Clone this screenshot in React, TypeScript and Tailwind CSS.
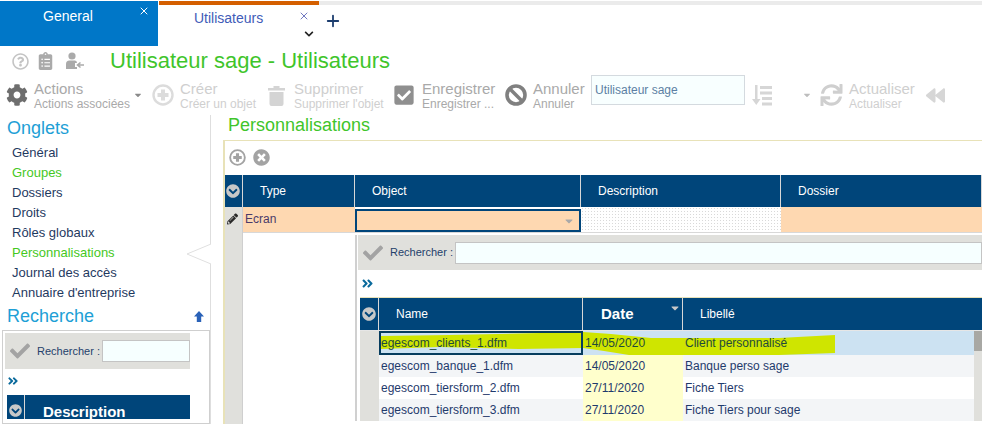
import {
  FaBackward,
  FaCaretDown,
  FaCheck,
  FaCheckSquare,
  FaChevronCircleDown,
  FaChevronDown,
  FaClipboardList,
  FaCog,
  FaPencilAlt,
  FaRegQuestionCircle,
  FaSync,
  FaTimesCircle,
  FaAngleDoubleRight,
} from 'react-icons/fa';
import { Plus, X } from 'lucide-react';

const tabs = ['Général', 'Groupes', 'Dossiers', 'Droits', 'Rôles globaux', 'Personnalisations', "Journal des accès", "Annuaire d'entreprise"];

const rows = [
  { name: 'egescom_clients_1.dfm', date: '14/05/2020', label: 'Client personnalisé' },
  { name: 'egescom_banque_1.dfm', date: '14/05/2020', label: 'Banque perso sage' },
  { name: 'egescom_tiersform_2.dfm', date: '27/11/2020', label: 'Fiche Tiers' },
  { name: 'egescom_tiersform_3.dfm', date: '27/11/2020', label: 'Fiche Tiers pour sage' },
];

function ToolItem({ title, sub, w, dim }: { title: string; sub: string; w: string; dim?: boolean }) {
  return (
    <div className={`${w} shrink-0 mt-[2px] ${dim ? 'text-[#cfcfcf]' : 'text-[#a9a9a9]'}`}>
      <div className="text-[15px] leading-[16px] whitespace-nowrap">{title}</div>
      <div className="text-[12px] leading-[14px] whitespace-nowrap">{sub}</div>
    </div>
  );
}

function RingPlus({ className }: { className: string }) {
  return (
    <svg className={className} viewBox="0 0 22 22" fill="none">
      <circle cx="11" cy="11" r="9.5" stroke="currentColor" strokeWidth="2.4" />
      <path d="M11 5.5v11M5.5 11h11" stroke="currentColor" strokeWidth="4" />
    </svg>
  );
}

function SearchBar({ className, inputClass }: { className: string; inputClass: string }) {
  return (
    <div className={`flex items-center bg-[#e0e0dc] ${className}`}>
      <FaCheck className="w-5 h-5 text-[#a3a3a3] shrink-0" />
      <span className="ml-[7px] text-[11px] text-[#24406b] whitespace-nowrap">Rechercher :</span>
      <div className={`h-[22px] ml-[2px] bg-[#f6ffff] border border-[#c4c4c4] ${inputClass}`} />
    </div>
  );
}

export default function App() {
  return (
    <div className="w-[982px] h-[424px] overflow-hidden bg-white font-['Liberation_Sans',Arial,sans-serif]">
      {/* onglets du haut */}
      <div className="flex h-[46px] pt-px">
        <div className="relative w-[158px] bg-[#0077c8] text-white text-[14px] pt-[5px] pl-[43px]">
          General
          <X className="absolute left-[138px] top-[4px] w-[12px] h-[12px]" strokeWidth={2} />
        </div>
        <div className="relative ml-px w-[160px] h-[41px] border-t-4 border-[#d45f00] text-[#3f5cb8] text-[14px] pt-[3px] pl-[35px]">
          Utilisateurs
          <X className="absolute left-[139px] top-[5px] w-[12px] h-[12px] text-[#4b55b0]" strokeWidth={1.6} />
          <FaChevronDown className="absolute left-[145px] top-[24px] w-[10px] h-[10px] text-[#222]" />
        </div>
        <div className="flex-1 h-[41px] border-t-4 border-[#ebebeb] pl-[5px] pt-[7px]">
          <Plus className="w-[18px] h-[18px] text-[#1c3d6e]" strokeWidth={2.4} />
        </div>
      </div>

      {/* titre */}
      <div className="flex items-center h-[30px] pl-[12px] text-[#b9b9b9]">
        <FaRegQuestionCircle className="w-[17px] h-[17px] text-[#c4c4c4]" />
        <FaClipboardList className="ml-[9px] w-[15px] h-[18px] text-[#aaa]" />
        <svg className="ml-[13px] w-[18px] h-[18px] text-[#aaa]" viewBox="0 0 18 18">
          <circle cx="6" cy="4" r="3.6" fill="currentColor" />
          <path d="M0 17V12Q0 8.5 3.5 8.5H9Q11 8.5 11 11H9V15H11V17Z" fill="currentColor" />
          <path d="M18 13H12M14.5 10.5L11.5 13L14.5 15.5" stroke="currentColor" strokeWidth="1.6" fill="none" />
        </svg>
        <h1 className="ml-[26px] text-[22px] leading-none text-[#3fc52b] font-normal whitespace-nowrap">Utilisateur sage - Utilisateurs</h1>
      </div>

      {/* barre d'outils */}
      <div className="flex items-center h-[36px] pl-[6px] pt-[2px]">
        <FaCog className="w-[22px] h-[22px] text-[#6e6e6e] shrink-0" />
        <div className="ml-[6px]"><ToolItem title="Actions" sub="Actions associées" w="w-[99px]" /></div>
        <FaCaretDown className="w-[10px] h-[10px] text-[#8a8a8a] shrink-0" />
        <RingPlus className="ml-[9px] w-[22px] h-[22px] text-[#dcdcdc] shrink-0" />
        <div className="ml-[6px]"><ToolItem title="Créer" sub="Créer un objet" w="w-[88px]" dim /></div>
        <svg className="w-[17px] h-[21px] text-[#d4d4d4] shrink-0" viewBox="0 0 17 21">
          <path d="M0 3H5.5V1H11.5V3H17V5.5H0ZM1.5 7H15.5V19Q15.5 21 13.5 21H3.5Q1.5 21 1.5 19Z" fill="currentColor" />
        </svg>
        <div className="ml-[9px]"><ToolItem title="Supprimer" sub="Supprimer l'objet" w="w-[99px]" dim /></div>
        <FaCheckSquare className="w-[22px] h-[22px] text-[#8f8f8f] shrink-0" />
        <div className="ml-[7px]"><ToolItem title="Enregistrer" sub="Enregistrer ..." w="w-[83px]" /></div>
        <svg className="w-[22px] h-[22px] text-[#808080] shrink-0" viewBox="0 0 22 22" fill="none">
          <circle cx="11" cy="11" r="9" stroke="currentColor" strokeWidth="3.6" />
          <path d="M4.5 4.5L17.5 17.5" stroke="currentColor" strokeWidth="3.6" />
        </svg>
        <div className="ml-[6px]"><ToolItem title="Annuler" sub="Annuler" w="w-[58px]" /></div>
        <div className="w-[154px] h-[30px] shrink-0 -mt-[10px] bg-[#f8ffff] border border-[#d4dadf] pl-[3px] text-[12px] leading-[28px] text-[#5c7fa3]">
          Utilisateur sage
        </div>
        <svg className="ml-[7px] w-[20px] h-[22px] text-[#d6d6d6] shrink-0" viewBox="0 0 20 22">
          <path d="M3 1H5.5V15H8.5L4.25 21L0 15H3Z" fill="currentColor" />
          <path d="M8 2H20V5H8ZM8 7.5H20V10.5H8ZM10 13H20V16H10ZM10 18.5H20V21.5H10Z" fill="currentColor" />
        </svg>
        <FaCaretDown className="ml-[30px] w-[10px] h-[10px] text-[#bdbdbd] shrink-0" />
        <FaSync className="ml-[8px] w-[23px] h-[22px] text-[#cfcfcf] shrink-0" />
        <div className="ml-[6px]"><ToolItem title="Actualiser" sub="Actualiser" w="w-[76px]" dim /></div>
        <FaBackward className="w-[21px] h-[19px] text-[#d6d6d6] shrink-0" />
      </div>

      <div className="flex h-[312px]">
        {/* colonne de gauche */}
        <aside className="relative w-[211px] shrink-0 border-r border-[#dedede] mt-[3px] pl-[2px]">
          <h2 className="pl-[5px] pt-[3px] text-[18px] leading-[21px] text-[#1e9fd6]">Onglets</h2>
          <ul className="mt-[4px] pl-[10px]">
            {tabs.map((t) => (
              <li
                key={t}
                className={`h-[20px] text-[13px] leading-[20px] ${t === 'Groupes' || t === 'Personnalisations' ? 'text-[#45c81e]' : 'text-[#1f3a5f]'}`}
              >
                {t}
              </li>
            ))}
          </ul>
          <div className="flex items-center justify-between h-[27px] pl-[5px] pr-[6px]">
            <span className="text-[18px] text-[#1e9fd6]">Recherche</span>
            <svg className="w-[10px] h-[11px] text-[#2a62b8]" viewBox="0 0 10 11">
              <path d="M5 0L10 5.5H7.2V11H2.8V5.5H0Z" fill="currentColor" />
            </svg>
          </div>
          <div className="h-[94px] border border-[#cfcfcf] pt-[2px] pl-[2px] pr-[19px]">
            <SearchBar className="h-[36px] pl-[5px]" inputClass="w-[89px]" />
            <FaAngleDoubleRight className="mt-[6px] ml-[2px] w-[12px] h-[12px] text-[#0a6a9c]" />
            <div className="flex h-[24px] mt-[8px] ml-[2px] bg-[#00457a] w-[183px]">
              <div className="w-[18px] pt-[9px] pl-[2px] border-r border-[#d7d7d7]">
                <FaChevronCircleDown className="w-[13px] h-[13px] text-[#c8c8c8]" />
              </div>
              <div className="pl-[18px] pt-[8px] text-[15px] font-bold leading-[17px] text-white">Description</div>
            </div>
          </div>
          {/* encoche du menu */}
          <svg className="absolute left-[186px] top-[128px] w-[25px] h-[22px]" viewBox="0 0 25 22">
            <path d="M25 1 L1 11 L25 21" fill="white" stroke="#e0e0e0" />
          </svg>
        </aside>

        {/* contenu */}
        <main className="flex-1 min-w-0 pl-[12px]">
          <div className="h-[28px] pl-[5px] pt-[3px] text-[18px] leading-[21px] text-[#3fc52b]">Personnalisations</div>
          <div className="h-[284px] border-t border-l-2 border-[#e8e2b8]">
            <div className="flex items-center gap-[7px] h-[34px] pl-[4px] pb-[2px]">
              <RingPlus className="w-[17px] h-[17px] text-[#a3a3a3]" />
              <FaTimesCircle className="w-[17px] h-[17px] text-[#a3a3a3]" />
            </div>
            <div className="flex h-[32px] bg-[#00457a] text-white text-[12px] leading-[32px]">
              <div className="w-[18px] shrink-0 pt-[9px] pl-[1px] border-r border-[#d7d7d7]">
                <FaChevronCircleDown className="w-[14px] h-[14px] text-[#c8c8c8]" />
              </div>
              <div className="w-[112px] shrink-0 pl-[17px] border-r border-[#d7d7d7]">Type</div>
              <div className="w-[226px] shrink-0 pl-[17px] border-r border-[#d7d7d7]">Object</div>
              <div className="w-[200px] shrink-0 pl-[17px] border-r border-[#d7d7d7]">Description</div>
              <div className="w-[201px] shrink-0 pl-[17px] border-r border-[#d7d7d7]">Dossier</div>
            </div>
            <div className="flex h-[217px]">
              <div className="w-[18px] shrink-0 bg-[#e0e0dc] border-r border-[#cfcfcf] pt-[5px] pl-[2px]">
                <FaPencilAlt className="w-[11px] h-[14px] text-[#2a2a2a]" />
              </div>
              <div className="flex-1 min-w-0">
                <div className="flex h-[26px] border-b border-[#d8d8d8]">
                  <div className="w-[112px] shrink-0 bg-[#fed8b1] pl-[2px] text-[12px] leading-[25px] text-[#4a3a6a]">Ecran</div>
                  <div className="w-[226px] shrink-0 bg-[#fed8b1] border-2 border-[#00457a] mt-[2px] h-[23px] flex items-center justify-end pr-[4px]">
                    <FaCaretDown className="w-[12px] h-[12px] text-[#a9a9a9]" />
                  </div>
                  <div className="w-[200px] shrink-0 bg-[radial-gradient(#d9d9d9_0.6px,transparent_0.6px)] bg-[length:3px_3px]" />
                  <div className="flex-1 bg-[#fed8b1]" />
                </div>
                {/* liste déroulante */}
                <div className="ml-[112px] mt-[2px] border-l-2 border-[#d0d0d0] pl-px">
                  <SearchBar className="h-[35px] pl-[5px]" inputClass="flex-1" />
                  <div className="h-[27px] pl-[3px] pt-[7px]">
                    <FaAngleDoubleRight className="w-[13px] h-[13px] text-[#0a6a9c]" />
                  </div>
                  <div className="ml-[2px] border-t border-[#e8e2b8]">
                    <div className="flex h-[33px] bg-[#00457a] text-white text-[12px] leading-[32px] border-b border-[#e6e6e6]">
                      <div className="w-[19px] shrink-0 pt-[9px] pl-[2px] border-r border-[#d7d7d7]">
                        <FaChevronCircleDown className="w-[14px] h-[14px] text-[#c8c8c8]" />
                      </div>
                      <div className="w-[204px] shrink-0 pl-[17px] border-r border-[#d7d7d7]">Name</div>
                      <div className="relative w-[100px] shrink-0 pl-[18px] border-r border-[#d7d7d7] text-[15px] font-bold">
                        Date
                        <FaCaretDown className="absolute right-[1px] top-[4px] w-[12px] h-[12px] text-[#c8c8c8]" />
                      </div>
                      <div className="flex-1 pl-[17px]">Libellé</div>
                    </div>
                    <div className="relative flex">
                      <div className="w-[19px] shrink-0 bg-[#e0e0dc]" />
                      <div className="relative flex-1 min-w-0">
                        {/* trait de surligneur */}
                        <svg className="absolute left-0 top-0 w-[460px] h-[26px] z-10 pointer-events-none" viewBox="0 0 460 26">
                          <path
                            d="M2 5 L70 4 L204 1 L232 3 L272 7 L340 7 L400 7 L456 4 L456 22 L400 24 L340 24 L272 24 L250 24 L225 20 L204 17 L140 18 L60 16 L2 18 Z"
                            fill="#cfe500"
                          />
                        </svg>
                        {rows.map((r, i) => (
                          <div
                            key={r.name}
                            className={`relative flex text-[12px] text-[#1f3a6c] ${i === 0 ? 'h-[24px] leading-[24px] bg-[#cce2f2]' : 'h-[22px] leading-[22px]'} ${i % 2 === 1 ? 'bg-[#f3f5f7]' : ''}`}
                          >
                            <div className={`relative z-20 w-[204px] shrink-0 ${i === 0 ? 'border-2 border-[#063c5e] leading-[20px] text-[#1f4a3c]' : 'pl-[2px]'}`}>{r.name}</div>
                            <div className={`relative z-20 w-[100px] shrink-0 pl-[2px] ${i === 0 ? 'text-[#1f4a3c]' : 'bg-[#ffffcc]'}`}>{r.date}</div>
                            <div className={`relative z-20 flex-1 pl-[2px] ${i === 0 ? 'text-[#1f4a3c]' : ''}`}>{r.label}</div>
                          </div>
                        ))}
                      </div>
                      <div className="absolute right-0 top-0 w-[8px] h-[90px] bg-[#e0e0dc] z-30">
                        <div className="h-[20px] bg-[#a8a8a4]" />
                      </div>
                    </div>
                  </div>
                </div>
              </div>
            </div>
          </div>
        </main>
      </div>
    </div>
  );
}
